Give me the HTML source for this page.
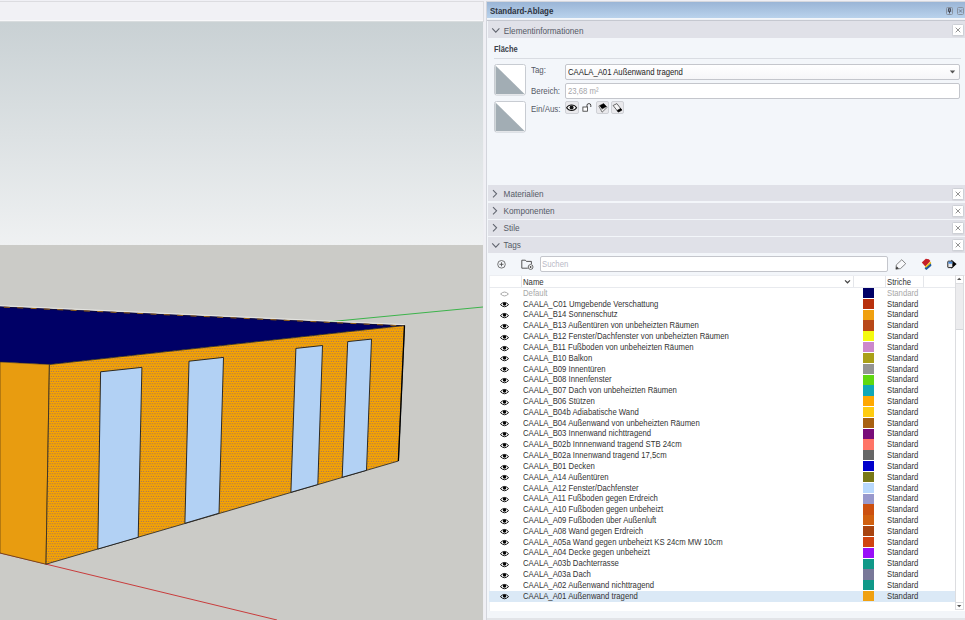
<!DOCTYPE html>
<html><head><meta charset="utf-8">
<style>
*{margin:0;padding:0;box-sizing:border-box}
html,body{width:965px;height:620px;overflow:hidden;background:#f0f0f5;font-family:"Liberation Sans",sans-serif;color:#333}
.abs{position:absolute}
#vp{position:absolute;left:0;top:0;width:484px;height:620px}
#panel{position:absolute;left:0;top:0;width:0;height:0}
.t{position:absolute;white-space:pre;font-size:8px;line-height:10px}
.hdr{position:absolute;left:487.5px;width:477.5px;height:16px;background:#e0e1e8}
.hdr .lbl{position:absolute;left:17px;top:3px;font-size:8.2px;color:#555a66;white-space:pre;line-height:10px}
.xb{position:absolute;width:13px;height:13px;background:#fff;border:1px solid #cdd0d6;border-radius:1.5px;box-shadow:0 0.5px 0.5px rgba(0,0,0,0.08)}

.hl{font-size:8.2px;color:#555a66}
.lab{color:#555a66;font-size:8.8px;transform:scaleX(0.9);transform-origin:0 0}
.n{font-size:8.8px;transform:scaleX(0.88);transform-origin:0 0}
.row{font-size:8.8px;letter-spacing:0;line-height:10.82px;transform:scaleX(0.879);transform-origin:0 0}
.thumb{position:absolute;width:32px;height:31.5px;background:#fff;border:1px solid #c8ccd2;border-radius:2px;overflow:hidden}
.thumb::after{content:"";position:absolute;left:1px;top:1px;right:1px;bottom:1px;background:linear-gradient(to top right,#a2adb4 50%,transparent 50%)}
.btn{position:absolute;top:101.3px;width:13.4px;height:13.2px;background:#e9e9ec;border:1px solid #cfd1d6;border-radius:2px}
.eye{position:absolute;left:500px;width:9px;height:5px}
.eye::before{content:"";position:absolute;left:0;top:0;width:7.6px;height:3.6px;border:0.7px solid #111;border-radius:50%}
.eye::after{content:"";position:absolute;left:3px;top:0.6px;width:3px;height:3.4px;background:#111;border-radius:50%}
.eyeo{position:absolute;left:500px;width:9px;height:5px}
.eyeo::before{content:"";position:absolute;left:0;top:0;width:7.6px;height:3.6px;border:0.7px solid #aaa;border-radius:50%}
</style></head><body>
<div id="vp">
<svg width="484" height="620" viewBox="0 0 484 620">
<defs>
<linearGradient id="sky" x1="0" y1="0" x2="0" y2="1">
<stop offset="0" stop-color="#c9d1d4"/><stop offset="1" stop-color="#eff1f2"/>
</linearGradient>
<pattern id="dots" width="2.5" height="5" patternUnits="userSpaceOnUse">
<rect width="2.5" height="5" fill="#f6a400"/>
<circle cx="1.25" cy="1.25" r="0.55" fill="#7a5c8c"/>
<circle cx="0" cy="3.75" r="0.55" fill="#7a5c8c"/><circle cx="2.5" cy="3.75" r="0.55" fill="#7a5c8c"/>
</pattern>
</defs>
<rect x="0" y="0" width="484" height="620" fill="#f0f0f5"/>
<rect x="0" y="1" width="483" height="1" fill="#dcdce0"/>
<rect x="0" y="2" width="483" height="18" fill="#f1f1f5"/>
<rect x="0" y="22" width="483" height="223" fill="url(#sky)"/><rect x="0" y="20" width="483" height="1.2" fill="#f8f8fa"/><rect x="0" y="21.2" width="483" height="1" fill="#d2d6d8"/>
<rect x="0" y="245" width="483" height="375" fill="#cbcbc7"/>
<rect x="483" y="1" width="1" height="21" fill="#dcdce0"/><rect x="483" y="22" width="1" height="598" fill="#eeeef2"/>
<!-- axes -->
<line x1="330" y1="321.7" x2="483" y2="307" stroke="#3cb44b" stroke-width="1"/>
<line x1="0" y1="553" x2="277" y2="620" stroke="#c83c3c" stroke-width="1"/>
<!-- roof -->
<polygon points="0,306.5 404.5,325.5 49.4,364.5 0,362" fill="#000066"/>
<line x1="0" y1="305.6" x2="404.5" y2="324.6" stroke="#e4e4e0" stroke-width="1"/>
<line x1="0" y1="307" x2="404.5" y2="326" stroke="#120c30" stroke-width="0.8"/>
<line x1="0" y1="306.9" x2="404.5" y2="325.9" stroke="#9a6418" stroke-width="1" stroke-dasharray="6 7.34" stroke-dashoffset="-3.9"/>
<!-- left face -->
<polygon points="0,362 49.4,364.5 46,564.2 0,553" fill="#e89c10" stroke="#3a2a10" stroke-width="0.6"/>
<!-- front face -->
<polygon points="49.4,364.5 404.5,325.5 398.4,461 46,564.2" fill="url(#dots)" stroke="#222" stroke-width="0.8"/>
<!-- windows -->
<line x1="404.5" y1="325.5" x2="398.4" y2="461" stroke="#000" stroke-width="1.3"/>
<g fill="#b2d1f4" stroke="#1a1a1a" stroke-width="0.9">
<polygon points="100.6,371.8 141.9,367.4 138.2,537.3 97.8,549"/>
<polygon points="189,361.2 223.5,357.4 219,513.2 184.9,523.3"/>
<polygon points="295.9,348.4 322.5,345.5 317.8,484.5 290.9,492.3"/>
<polygon points="347.7,341.6 371.5,339.1 366.5,470.3 342.2,477.3"/>
</g>
</svg>
</div>

<div id="panel">
<!-- panel outer -->
<div class="abs" style="left:486px;top:1.5px;width:479px;height:618.5px;background:#f3f6fa;border-left:1.2px solid #d3d5dc"></div><div class="abs" style="left:486px;top:1.2px;width:479px;height:1px;background:#d6d8de"></div>
<!-- title bar -->
<div class="abs" style="left:487px;top:2.2px;width:478px;height:16.2px;background:linear-gradient(#9ab5d6,#b9d2ec)"></div>
<div class="abs" style="left:487px;top:18.5px;width:478px;height:1px;background:#eef1f6"></div>
<div class="abs" style="left:487px;top:19.5px;width:478px;height:1.2px;background:#c5c8d0"></div>
<div class="t" style="left:490.2px;top:5.6px;font-weight:bold;font-size:8.8px;color:#2e3440;transform:scaleX(0.9);transform-origin:0 0">Standard-Ablage</div>
<div class="abs" style="left:946.3px;top:7px;width:6.5px;height:7.5px;border:1px solid #8892a0;border-radius:1.5px"></div>
<svg class="abs" style="left:946px;top:7px" width="7" height="8" viewBox="0 0 7 8"><path d="M2.2 1.8h2.6M2.6 1.8v2.4M4.4 1.8v2.4M1.8 4.2h3.4M3.5 4.2v2.2" stroke="#3a3a44" stroke-width="0.9" fill="none"/></svg>
<div class="abs" style="left:957.3px;top:7px;width:6.7px;height:7.5px;border:1px solid #8892a0;border-radius:1.5px"></div>
<svg class="abs" style="left:957px;top:7px" width="7" height="8" viewBox="0 0 7 8"><path d="M2 2.4l3 3.2M5 2.4l-3 3.2" stroke="#6a7080" stroke-width="0.8" fill="none"/></svg>

<!-- Elementinformationen header -->
<div class="hdr" style="top:21px;height:16.6px"></div>
<svg class="abs" style="left:491px;top:26.8px" width="10" height="7" viewBox="0 0 10 7"><path d="M1.2 1.4L4.8 5.2L8.4 1.4" stroke="#60646e" stroke-width="1.05" fill="none"/></svg>
<div class="t hl" style="left:503.8px;top:26.5px">Elementinformationen</div>
<div class="xb" style="left:951.8px;top:23.5px;width:12px;height:12px"></div>
<svg class="abs" style="left:951.8px;top:23.5px" width="12" height="12" viewBox="0 0 12 12"><path d="M3.7 3.7l4.6 4.6M8.3 3.7l-4.6 4.6" stroke="#4a4a4a" stroke-width="0.6" fill="none"/></svg>

<!-- content -->
<div class="t" style="left:493.8px;top:44.2px;font-weight:bold;font-size:8.6px;color:#3a3f4a;transform:scaleX(0.87);transform-origin:0 0">Fläche</div>
<div class="abs" style="left:493.5px;top:58px;width:467px;height:1px;background:#d9dce2"></div>
<svg class="abs" style="left:493.6px;top:64.1px" width="32" height="31.5" viewBox="0 0 32 31.5"><rect x="0.5" y="0.5" width="31" height="30.5" rx="2" fill="#fff" stroke="#c8ccd2"/><path d="M1.5 1.5L30.5 30H1.5z" fill="#a2adb4"/></svg>
<svg class="abs" style="left:493.6px;top:101.4px" width="32" height="31.5" viewBox="0 0 32 31.5"><rect x="0.5" y="0.5" width="31" height="30.5" rx="2" fill="#fff" stroke="#c8ccd2"/><path d="M1.5 1.5L30.5 30H1.5z" fill="#a2adb4"/></svg>
<div class="t lab" style="left:530.6px;top:65px">Tag:</div>
<div class="t lab" style="left:530.6px;top:85.6px">Bereich:</div>
<div class="t lab" style="left:530.6px;top:103.7px">Ein/Aus:</div>
<div class="abs" style="left:565px;top:64.4px;width:395px;height:15.2px;background:linear-gradient(#ffffff,#f6f6f8);border:1px solid #c4c6cc;border-radius:2px"></div>
<div class="t n" style="left:567.9px;top:66.9px;color:#222">CAALA_A01 Außenwand tragend</div>
<svg class="abs" style="left:949px;top:70px" width="7" height="4" viewBox="0 0 7 4"><path d="M0.8 0.6h5.4L3.5 3.4z" fill="#555"/></svg>
<div class="abs" style="left:565px;top:83.2px;width:395px;height:15.7px;background:#fff;border:1px solid #c4c6cc;border-radius:2px"></div>
<div class="t n" style="left:567.5px;top:85.7px;color:#a6a6aa">23,68 m²</div>
<!-- buttons -->
<div class="btn" style="left:565.4px"></div>
<div class="btn" style="left:595.5px"></div>
<div class="btn" style="left:611.1px"></div>
<svg class="abs" style="left:565.4px;top:101.3px" width="13.2" height="13.4" viewBox="0 0 13.2 13.4"><path d="M1.6 6.8C3.9 3.2 9.3 3.2 11.6 6.8C9.3 10.4 3.9 10.4 1.6 6.8z" fill="#fff" stroke="#111" stroke-width="1.05"/><circle cx="6.6" cy="6.5" r="2" fill="#111"/></svg>
<svg class="abs" style="left:582px;top:103px" width="10" height="9" viewBox="0 0 10 9"><rect x="0.9" y="4" width="4.6" height="4.2" fill="#fff" stroke="#333" stroke-width="0.8"/><path d="M5 4V2.2Q5 0.6 6.9 0.6Q8.8 0.6 8.8 2.2V4" fill="none" stroke="#333" stroke-width="0.9"/></svg>
<svg class="abs" style="left:595.5px;top:101.3px" width="13.4" height="13.4" viewBox="0 0 13.4 13.4"><path d="M2.8 5L7.7 2.6L11.2 6.3L6.1 11.2z" fill="#f4f4f4" stroke="#555" stroke-width="0.8"/><path d="M3.6 4.8L7.7 2.6L10.6 5.8L6.2 8.2z" fill="#000"/><path d="M5 8.6L9.4 6.6" stroke="#999" stroke-width="0.6"/></svg>
<svg class="abs" style="left:611.1px;top:101.3px" width="13.4" height="13.4" viewBox="0 0 13.4 13.4"><path d="M2.1 4.5L5.9 2.6L10.8 9.1L7.3 11z" fill="#f4f4f4" stroke="#444" stroke-width="0.8"/><path d="M6.2 9.4L9.6 7.5L10.8 9.1L7.3 11z" fill="#000" stroke="#000" stroke-width="0.6"/></svg>

<!-- collapsed headers -->
<div class="hdr" style="top:185.1px;height:16.4px"></div>
<div class="hdr" style="top:202.5px;height:16.4px"></div>
<div class="hdr" style="top:219.9px;height:16.2px"></div>
<div class="hdr" style="top:237px;height:15.6px"></div>
<svg class="abs" style="left:491px;top:188.5px" width="7" height="10" viewBox="0 0 7 10"><path d="M2 1.2L5.6 4.8L2 8.4" stroke="#60646e" stroke-width="1.05" fill="none"/></svg>
<svg class="abs" style="left:491px;top:205.7px" width="7" height="10" viewBox="0 0 7 10"><path d="M2 1.2L5.6 4.8L2 8.4" stroke="#60646e" stroke-width="1.05" fill="none"/></svg>
<svg class="abs" style="left:491px;top:222.9px" width="7" height="10" viewBox="0 0 7 10"><path d="M2 1.2L5.6 4.8L2 8.4" stroke="#60646e" stroke-width="1.05" fill="none"/></svg>
<svg class="abs" style="left:491px;top:241.5px" width="10" height="7" viewBox="0 0 10 7"><path d="M1.2 1.4L4.8 5.2L8.4 1.4" stroke="#60646e" stroke-width="1.05" fill="none"/></svg>
<div class="t hl" style="left:503.6px;top:189.8px">Materialien</div>
<div class="t hl" style="left:503.6px;top:207px">Komponenten</div>
<div class="t hl" style="left:503.6px;top:224.2px">Stile</div>
<div class="t hl" style="left:503.6px;top:241px">Tags</div>
<div class="xb" style="left:951.8px;top:187.5px;width:12px;height:12px"></div>
<div class="xb" style="left:951.8px;top:204.7px;width:12px;height:12px"></div>
<div class="xb" style="left:951.8px;top:221.9px;width:12px;height:12px"></div>
<div class="xb" style="left:951.8px;top:238.8px;width:12px;height:12px"></div>
<svg class="abs" style="left:951.8px;top:187.5px" width="12" height="12" viewBox="0 0 12 12"><path d="M3.7 3.7l4.6 4.6M8.3 3.7l-4.6 4.6" stroke="#4a4a4a" stroke-width="0.6" fill="none"/></svg>
<svg class="abs" style="left:951.8px;top:204.7px" width="12" height="12" viewBox="0 0 12 12"><path d="M3.7 3.7l4.6 4.6M8.3 3.7l-4.6 4.6" stroke="#4a4a4a" stroke-width="0.6" fill="none"/></svg>
<svg class="abs" style="left:951.8px;top:221.9px" width="12" height="12" viewBox="0 0 12 12"><path d="M3.7 3.7l4.6 4.6M8.3 3.7l-4.6 4.6" stroke="#4a4a4a" stroke-width="0.6" fill="none"/></svg>
<svg class="abs" style="left:951.8px;top:238.8px" width="12" height="12" viewBox="0 0 12 12"><path d="M3.7 3.7l4.6 4.6M8.3 3.7l-4.6 4.6" stroke="#4a4a4a" stroke-width="0.6" fill="none"/></svg>

<!-- tags toolbar -->
<svg class="abs" style="left:497px;top:260px" width="10" height="9" viewBox="0 0 10 9"><circle cx="4.5" cy="4.3" r="3.8" fill="none" stroke="#555" stroke-width="0.8"/><path d="M4.5 2.3v4M2.5 4.3h4" stroke="#555" stroke-width="0.9"/></svg>
<svg class="abs" style="left:521px;top:259px" width="13" height="11" viewBox="0 0 13 11"><path d="M0.8 1.2h3.6l1 1.2h5v2.6M0.8 1.2v8h6" fill="none" stroke="#444" stroke-width="0.9"/><circle cx="9.6" cy="8" r="2.4" fill="#fff" stroke="#444" stroke-width="0.8"/><circle cx="9.6" cy="8" r="0.9" fill="#444"/></svg>
<div class="abs" style="left:540px;top:256px;width:347.5px;height:15.8px;background:#fff;border:1px solid #c4c6cc;border-radius:2px"></div>
<div class="t n" style="left:542.1px;top:259.2px;color:#b9b9c6">Suchen</div>
<svg class="abs" style="left:895px;top:258.5px" width="12" height="11" viewBox="0 0 12 11"><path d="M0.9 10.2L1.3 5.9L6.8 0.7L10.7 4.7L5.5 9.6z" fill="#f8f9fb" stroke="#707070" stroke-width="0.85"/><path d="M0.9 10.2L1.5 7.2L3.9 9.4z" fill="#333"/></svg>
<svg class="abs" style="left:921px;top:258px" width="11" height="12" viewBox="0 0 11 12"><path d="M3.8 9.8L9.8 4.4L10.4 7.8L5.4 12L3.8 10.8z" fill="#1d5a9e"/><path d="M0.8 4.5L4.8 0.7L7.8 1.2L9.4 3L4.3 8.6z" fill="#c42028"/><path d="M4.4 9.2L9.8 4.4" stroke="#f2c010" stroke-width="1.5"/></svg>
<svg class="abs" style="left:946.5px;top:258.5px" width="10" height="11" viewBox="0 0 10 11"><path d="M4.4 0.8L9.6 5.1L4.4 9.8z" fill="#000"/><rect x="0.8" y="2.2" width="5" height="6.4" rx="0.6" fill="#e8e8ea" stroke="#111" stroke-width="0.9"/><rect x="1.4" y="2.7" width="3.9" height="2" fill="#4a8ad8"/></svg>

<!-- table -->
<div class="abs" style="left:489px;top:274.9px;width:476px;height:335.8px;background:#fff;border-top:1px solid #eceef2;border-left:1px solid #eef0f4"></div>
<div class="abs" style="left:489px;top:286.6px;width:466px;height:1px;background:#e8eaee"></div>
<div class="abs" style="left:520.6px;top:275.5px;width:1px;height:11.5px;background:#e4e6ea"></div>
<div class="abs" style="left:853.2px;top:275.5px;width:1px;height:11.5px;background:#e4e6ea"></div>
<div class="abs" style="left:885.3px;top:275.5px;width:1px;height:11.5px;background:#e4e6ea"></div>
<div class="abs" style="left:923.2px;top:275.5px;width:1px;height:11.5px;background:#e4e6ea"></div>
<div class="t n" style="left:522.7px;top:277px;color:#333">Name</div>
<div class="t n" style="left:886.9px;top:277px;color:#333">Striche</div>
<svg class="abs" style="left:844px;top:279px" width="7" height="5" viewBox="0 0 7 5"><path d="M1 1.4L3.5 3.8L6 1.4" stroke="#444" stroke-width="1.2" fill="none"/></svg>
<!-- scrollbar -->
<div class="abs" style="left:955.4px;top:275.2px;width:8.4px;height:335px;background:#fff;border:1px solid #dcdde0"></div>
<div class="abs" style="left:955.9px;top:283px;width:7.4px;height:47.4px;background:#ececee;border-bottom:1px solid #d4d6da"></div>
<div class="abs" style="left:955.4px;top:283px;width:8.4px;height:1px;background:#dcdde0"></div>
<div class="abs" style="left:955.4px;top:601.5px;width:8.4px;height:1px;background:#dcdde0"></div>
<svg class="abs" style="left:955.4px;top:276px" width="8.4" height="6" viewBox="0 0 8.4 6"><path d="M2 4L4.2 1.8L6.4 4z" fill="#555"/></svg>
<svg class="abs" style="left:955.4px;top:603px" width="8.4" height="6" viewBox="0 0 8.4 6"><path d="M2 2L4.2 4.2L6.4 2z" fill="#555"/></svg>
<div class="abs" style="left:487px;top:610.7px;width:478px;height:10px;background:#f2f5f9"></div>
<div class="abs" style="left:487px;top:617.8px;width:478px;height:2.2px;background:#e2e4e8"></div>
<div class="abs" style="left:863px;top:288.00px;width:11px;height:10.2px;background:#000066"></div>
<svg class="abs" style="left:500px;top:290.60px" width="9" height="6" viewBox="0 0 9 6"><path d="M0.6 3Q4.5 -0.9 8.4 3Q4.5 6.9 0.6 3z" fill="none" stroke="#a4a4a4" stroke-width="0.95"/></svg>
<div class="t row" style="left:522.5px;top:287.80px;color:#a8a8a8">Default</div>
<div class="t row" style="left:886.5px;top:287.80px;color:#a8a8a8">Standard</div>
<div class="abs" style="left:863px;top:298.82px;width:11px;height:10.2px;background:#b8300c"></div>
<svg class="abs" style="left:500px;top:301.22px" width="9" height="7" viewBox="0 0 9 7"><path d="M0.4 3.6Q4.5 -0.7 8.6 3.6Q4.5 7.9 0.4 3.6z" fill="none" stroke="#1a1a1a" stroke-width="1"/><circle cx="4.5" cy="3.1" r="1.7" fill="#000"/></svg>
<div class="t row" style="left:522.5px;top:298.62px;color:#333">CAALA_C01 Umgebende Verschattung</div>
<div class="t row" style="left:886.5px;top:298.62px;color:#333">Standard</div>
<div class="abs" style="left:863px;top:309.64px;width:11px;height:10.2px;background:#f0a010"></div>
<svg class="abs" style="left:500px;top:312.04px" width="9" height="7" viewBox="0 0 9 7"><path d="M0.4 3.6Q4.5 -0.7 8.6 3.6Q4.5 7.9 0.4 3.6z" fill="none" stroke="#1a1a1a" stroke-width="1"/><circle cx="4.5" cy="3.1" r="1.7" fill="#000"/></svg>
<div class="t row" style="left:522.5px;top:309.44px;color:#333">CAALA_B14 Sonnenschutz</div>
<div class="t row" style="left:886.5px;top:309.44px;color:#333">Standard</div>
<div class="abs" style="left:863px;top:320.46px;width:11px;height:10.2px;background:#b84818"></div>
<svg class="abs" style="left:500px;top:322.86px" width="9" height="7" viewBox="0 0 9 7"><path d="M0.4 3.6Q4.5 -0.7 8.6 3.6Q4.5 7.9 0.4 3.6z" fill="none" stroke="#1a1a1a" stroke-width="1"/><circle cx="4.5" cy="3.1" r="1.7" fill="#000"/></svg>
<div class="t row" style="left:522.5px;top:320.26px;color:#333">CAALA_B13 Außentüren von unbeheizten Räumen</div>
<div class="t row" style="left:886.5px;top:320.26px;color:#333">Standard</div>
<div class="abs" style="left:863px;top:331.28px;width:11px;height:10.2px;background:#f4fa10"></div>
<svg class="abs" style="left:500px;top:333.68px" width="9" height="7" viewBox="0 0 9 7"><path d="M0.4 3.6Q4.5 -0.7 8.6 3.6Q4.5 7.9 0.4 3.6z" fill="none" stroke="#1a1a1a" stroke-width="1"/><circle cx="4.5" cy="3.1" r="1.7" fill="#000"/></svg>
<div class="t row" style="left:522.5px;top:331.08px;color:#333">CAALA_B12 Fenster/Dachfenster von unbeheizten Räumen</div>
<div class="t row" style="left:886.5px;top:331.08px;color:#333">Standard</div>
<div class="abs" style="left:863px;top:342.10px;width:11px;height:10.2px;background:#cc88cc"></div>
<svg class="abs" style="left:500px;top:344.50px" width="9" height="7" viewBox="0 0 9 7"><path d="M0.4 3.6Q4.5 -0.7 8.6 3.6Q4.5 7.9 0.4 3.6z" fill="none" stroke="#1a1a1a" stroke-width="1"/><circle cx="4.5" cy="3.1" r="1.7" fill="#000"/></svg>
<div class="t row" style="left:522.5px;top:341.90px;color:#333">CAALA_B11 Fußboden von unbeheizten Räumen</div>
<div class="t row" style="left:886.5px;top:341.90px;color:#333">Standard</div>
<div class="abs" style="left:863px;top:352.92px;width:11px;height:10.2px;background:#aaa018"></div>
<svg class="abs" style="left:500px;top:355.32px" width="9" height="7" viewBox="0 0 9 7"><path d="M0.4 3.6Q4.5 -0.7 8.6 3.6Q4.5 7.9 0.4 3.6z" fill="none" stroke="#1a1a1a" stroke-width="1"/><circle cx="4.5" cy="3.1" r="1.7" fill="#000"/></svg>
<div class="t row" style="left:522.5px;top:352.72px;color:#333">CAALA_B10 Balkon</div>
<div class="t row" style="left:886.5px;top:352.72px;color:#333">Standard</div>
<div class="abs" style="left:863px;top:363.74px;width:11px;height:10.2px;background:#949494"></div>
<svg class="abs" style="left:500px;top:366.14px" width="9" height="7" viewBox="0 0 9 7"><path d="M0.4 3.6Q4.5 -0.7 8.6 3.6Q4.5 7.9 0.4 3.6z" fill="none" stroke="#1a1a1a" stroke-width="1"/><circle cx="4.5" cy="3.1" r="1.7" fill="#000"/></svg>
<div class="t row" style="left:522.5px;top:363.54px;color:#333">CAALA_B09 Innentüren</div>
<div class="t row" style="left:886.5px;top:363.54px;color:#333">Standard</div>
<div class="abs" style="left:863px;top:374.56px;width:11px;height:10.2px;background:#60d810"></div>
<svg class="abs" style="left:500px;top:376.96px" width="9" height="7" viewBox="0 0 9 7"><path d="M0.4 3.6Q4.5 -0.7 8.6 3.6Q4.5 7.9 0.4 3.6z" fill="none" stroke="#1a1a1a" stroke-width="1"/><circle cx="4.5" cy="3.1" r="1.7" fill="#000"/></svg>
<div class="t row" style="left:522.5px;top:374.36px;color:#333">CAALA_B08 Innenfenster</div>
<div class="t row" style="left:886.5px;top:374.36px;color:#333">Standard</div>
<div class="abs" style="left:863px;top:385.38px;width:11px;height:10.2px;background:#10a8b8"></div>
<svg class="abs" style="left:500px;top:387.78px" width="9" height="7" viewBox="0 0 9 7"><path d="M0.4 3.6Q4.5 -0.7 8.6 3.6Q4.5 7.9 0.4 3.6z" fill="none" stroke="#1a1a1a" stroke-width="1"/><circle cx="4.5" cy="3.1" r="1.7" fill="#000"/></svg>
<div class="t row" style="left:522.5px;top:385.18px;color:#333">CAALA_B07 Dach von unbeheizten Räumen</div>
<div class="t row" style="left:886.5px;top:385.18px;color:#333">Standard</div>
<div class="abs" style="left:863px;top:396.20px;width:11px;height:10.2px;background:#ffa800"></div>
<svg class="abs" style="left:500px;top:398.60px" width="9" height="7" viewBox="0 0 9 7"><path d="M0.4 3.6Q4.5 -0.7 8.6 3.6Q4.5 7.9 0.4 3.6z" fill="none" stroke="#1a1a1a" stroke-width="1"/><circle cx="4.5" cy="3.1" r="1.7" fill="#000"/></svg>
<div class="t row" style="left:522.5px;top:396.00px;color:#333">CAALA_B06 Stützen</div>
<div class="t row" style="left:886.5px;top:396.00px;color:#333">Standard</div>
<div class="abs" style="left:863px;top:407.02px;width:11px;height:10.2px;background:#ffcc10"></div>
<svg class="abs" style="left:500px;top:409.42px" width="9" height="7" viewBox="0 0 9 7"><path d="M0.4 3.6Q4.5 -0.7 8.6 3.6Q4.5 7.9 0.4 3.6z" fill="none" stroke="#1a1a1a" stroke-width="1"/><circle cx="4.5" cy="3.1" r="1.7" fill="#000"/></svg>
<div class="t row" style="left:522.5px;top:406.82px;color:#333">CAALA_B04b Adiabatische Wand</div>
<div class="t row" style="left:886.5px;top:406.82px;color:#333">Standard</div>
<div class="abs" style="left:863px;top:417.84px;width:11px;height:10.2px;background:#a86010"></div>
<svg class="abs" style="left:500px;top:420.24px" width="9" height="7" viewBox="0 0 9 7"><path d="M0.4 3.6Q4.5 -0.7 8.6 3.6Q4.5 7.9 0.4 3.6z" fill="none" stroke="#1a1a1a" stroke-width="1"/><circle cx="4.5" cy="3.1" r="1.7" fill="#000"/></svg>
<div class="t row" style="left:522.5px;top:417.64px;color:#333">CAALA_B04 Außenwand von unbeheizten Räumen</div>
<div class="t row" style="left:886.5px;top:417.64px;color:#333">Standard</div>
<div class="abs" style="left:863px;top:428.66px;width:11px;height:10.2px;background:#780c78"></div>
<svg class="abs" style="left:500px;top:431.06px" width="9" height="7" viewBox="0 0 9 7"><path d="M0.4 3.6Q4.5 -0.7 8.6 3.6Q4.5 7.9 0.4 3.6z" fill="none" stroke="#1a1a1a" stroke-width="1"/><circle cx="4.5" cy="3.1" r="1.7" fill="#000"/></svg>
<div class="t row" style="left:522.5px;top:428.46px;color:#333">CAALA_B03 Innenwand nichttragend</div>
<div class="t row" style="left:886.5px;top:428.46px;color:#333">Standard</div>
<div class="abs" style="left:863px;top:439.48px;width:11px;height:10.2px;background:#ff7466"></div>
<svg class="abs" style="left:500px;top:441.88px" width="9" height="7" viewBox="0 0 9 7"><path d="M0.4 3.6Q4.5 -0.7 8.6 3.6Q4.5 7.9 0.4 3.6z" fill="none" stroke="#1a1a1a" stroke-width="1"/><circle cx="4.5" cy="3.1" r="1.7" fill="#000"/></svg>
<div class="t row" style="left:522.5px;top:439.28px;color:#333">CAALA_B02b Innnenwand tragend STB 24cm</div>
<div class="t row" style="left:886.5px;top:439.28px;color:#333">Standard</div>
<div class="abs" style="left:863px;top:450.30px;width:11px;height:10.2px;background:#666666"></div>
<svg class="abs" style="left:500px;top:452.70px" width="9" height="7" viewBox="0 0 9 7"><path d="M0.4 3.6Q4.5 -0.7 8.6 3.6Q4.5 7.9 0.4 3.6z" fill="none" stroke="#1a1a1a" stroke-width="1"/><circle cx="4.5" cy="3.1" r="1.7" fill="#000"/></svg>
<div class="t row" style="left:522.5px;top:450.10px;color:#333">CAALA_B02a Innenwand tragend 17,5cm</div>
<div class="t row" style="left:886.5px;top:450.10px;color:#333">Standard</div>
<div class="abs" style="left:863px;top:461.12px;width:11px;height:10.2px;background:#0000cc"></div>
<svg class="abs" style="left:500px;top:463.52px" width="9" height="7" viewBox="0 0 9 7"><path d="M0.4 3.6Q4.5 -0.7 8.6 3.6Q4.5 7.9 0.4 3.6z" fill="none" stroke="#1a1a1a" stroke-width="1"/><circle cx="4.5" cy="3.1" r="1.7" fill="#000"/></svg>
<div class="t row" style="left:522.5px;top:460.92px;color:#333">CAALA_B01 Decken</div>
<div class="t row" style="left:886.5px;top:460.92px;color:#333">Standard</div>
<div class="abs" style="left:863px;top:471.94px;width:11px;height:10.2px;background:#787818"></div>
<svg class="abs" style="left:500px;top:474.34px" width="9" height="7" viewBox="0 0 9 7"><path d="M0.4 3.6Q4.5 -0.7 8.6 3.6Q4.5 7.9 0.4 3.6z" fill="none" stroke="#1a1a1a" stroke-width="1"/><circle cx="4.5" cy="3.1" r="1.7" fill="#000"/></svg>
<div class="t row" style="left:522.5px;top:471.74px;color:#333">CAALA_A14 Außentüren</div>
<div class="t row" style="left:886.5px;top:471.74px;color:#333">Standard</div>
<div class="abs" style="left:863px;top:482.76px;width:11px;height:10.2px;background:#b8d8fc"></div>
<svg class="abs" style="left:500px;top:485.16px" width="9" height="7" viewBox="0 0 9 7"><path d="M0.4 3.6Q4.5 -0.7 8.6 3.6Q4.5 7.9 0.4 3.6z" fill="none" stroke="#1a1a1a" stroke-width="1"/><circle cx="4.5" cy="3.1" r="1.7" fill="#000"/></svg>
<div class="t row" style="left:522.5px;top:482.56px;color:#333">CAALA_A12 Fenster/Dachfenster</div>
<div class="t row" style="left:886.5px;top:482.56px;color:#333">Standard</div>
<div class="abs" style="left:863px;top:493.58px;width:11px;height:10.2px;background:#9898cc"></div>
<svg class="abs" style="left:500px;top:495.98px" width="9" height="7" viewBox="0 0 9 7"><path d="M0.4 3.6Q4.5 -0.7 8.6 3.6Q4.5 7.9 0.4 3.6z" fill="none" stroke="#1a1a1a" stroke-width="1"/><circle cx="4.5" cy="3.1" r="1.7" fill="#000"/></svg>
<div class="t row" style="left:522.5px;top:493.38px;color:#333">CAALA_A11 Fußboden gegen Erdreich</div>
<div class="t row" style="left:886.5px;top:493.38px;color:#333">Standard</div>
<div class="abs" style="left:863px;top:504.40px;width:11px;height:10.2px;background:#cc5010"></div>
<svg class="abs" style="left:500px;top:506.80px" width="9" height="7" viewBox="0 0 9 7"><path d="M0.4 3.6Q4.5 -0.7 8.6 3.6Q4.5 7.9 0.4 3.6z" fill="none" stroke="#1a1a1a" stroke-width="1"/><circle cx="4.5" cy="3.1" r="1.7" fill="#000"/></svg>
<div class="t row" style="left:522.5px;top:504.20px;color:#333">CAALA_A10 Fußboden gegen unbeheizt</div>
<div class="t row" style="left:886.5px;top:504.20px;color:#333">Standard</div>
<div class="abs" style="left:863px;top:515.22px;width:11px;height:10.2px;background:#d06010"></div>
<svg class="abs" style="left:500px;top:517.62px" width="9" height="7" viewBox="0 0 9 7"><path d="M0.4 3.6Q4.5 -0.7 8.6 3.6Q4.5 7.9 0.4 3.6z" fill="none" stroke="#1a1a1a" stroke-width="1"/><circle cx="4.5" cy="3.1" r="1.7" fill="#000"/></svg>
<div class="t row" style="left:522.5px;top:515.02px;color:#333">CAALA_A09 Fußboden über Außenluft</div>
<div class="t row" style="left:886.5px;top:515.02px;color:#333">Standard</div>
<div class="abs" style="left:863px;top:526.04px;width:11px;height:10.2px;background:#a84410"></div>
<svg class="abs" style="left:500px;top:528.44px" width="9" height="7" viewBox="0 0 9 7"><path d="M0.4 3.6Q4.5 -0.7 8.6 3.6Q4.5 7.9 0.4 3.6z" fill="none" stroke="#1a1a1a" stroke-width="1"/><circle cx="4.5" cy="3.1" r="1.7" fill="#000"/></svg>
<div class="t row" style="left:522.5px;top:525.84px;color:#333">CAALA_A08 Wand gegen Erdreich</div>
<div class="t row" style="left:886.5px;top:525.84px;color:#333">Standard</div>
<div class="abs" style="left:863px;top:536.86px;width:11px;height:10.2px;background:#d04410"></div>
<svg class="abs" style="left:500px;top:539.26px" width="9" height="7" viewBox="0 0 9 7"><path d="M0.4 3.6Q4.5 -0.7 8.6 3.6Q4.5 7.9 0.4 3.6z" fill="none" stroke="#1a1a1a" stroke-width="1"/><circle cx="4.5" cy="3.1" r="1.7" fill="#000"/></svg>
<div class="t row" style="left:522.5px;top:536.66px;color:#333">CAALA_A05a Wand gegen unbeheizt KS 24cm MW 10cm</div>
<div class="t row" style="left:886.5px;top:536.66px;color:#333">Standard</div>
<div class="abs" style="left:863px;top:547.68px;width:11px;height:10.2px;background:#9810f8"></div>
<svg class="abs" style="left:500px;top:550.08px" width="9" height="7" viewBox="0 0 9 7"><path d="M0.4 3.6Q4.5 -0.7 8.6 3.6Q4.5 7.9 0.4 3.6z" fill="none" stroke="#1a1a1a" stroke-width="1"/><circle cx="4.5" cy="3.1" r="1.7" fill="#000"/></svg>
<div class="t row" style="left:522.5px;top:547.48px;color:#333">CAALA_A04 Decke gegen unbeheizt</div>
<div class="t row" style="left:886.5px;top:547.48px;color:#333">Standard</div>
<div class="abs" style="left:863px;top:558.50px;width:11px;height:10.2px;background:#109888"></div>
<svg class="abs" style="left:500px;top:560.90px" width="9" height="7" viewBox="0 0 9 7"><path d="M0.4 3.6Q4.5 -0.7 8.6 3.6Q4.5 7.9 0.4 3.6z" fill="none" stroke="#1a1a1a" stroke-width="1"/><circle cx="4.5" cy="3.1" r="1.7" fill="#000"/></svg>
<div class="t row" style="left:522.5px;top:558.30px;color:#333">CAALA_A03b Dachterrasse</div>
<div class="t row" style="left:886.5px;top:558.30px;color:#333">Standard</div>
<div class="abs" style="left:863px;top:569.32px;width:11px;height:10.2px;background:#787898"></div>
<svg class="abs" style="left:500px;top:571.72px" width="9" height="7" viewBox="0 0 9 7"><path d="M0.4 3.6Q4.5 -0.7 8.6 3.6Q4.5 7.9 0.4 3.6z" fill="none" stroke="#1a1a1a" stroke-width="1"/><circle cx="4.5" cy="3.1" r="1.7" fill="#000"/></svg>
<div class="t row" style="left:522.5px;top:569.12px;color:#333">CAALA_A03a Dach</div>
<div class="t row" style="left:886.5px;top:569.12px;color:#333">Standard</div>
<div class="abs" style="left:863px;top:580.14px;width:11px;height:10.2px;background:#109888"></div>
<svg class="abs" style="left:500px;top:582.54px" width="9" height="7" viewBox="0 0 9 7"><path d="M0.4 3.6Q4.5 -0.7 8.6 3.6Q4.5 7.9 0.4 3.6z" fill="none" stroke="#1a1a1a" stroke-width="1"/><circle cx="4.5" cy="3.1" r="1.7" fill="#000"/></svg>
<div class="t row" style="left:522.5px;top:579.94px;color:#333">CAALA_A02 Außenwand nichttragend</div>
<div class="t row" style="left:886.5px;top:579.94px;color:#333">Standard</div>
<div class="abs" style="left:489px;top:591.16px;width:466px;height:10.8px;background:#dbe9f6"></div>
<div class="abs" style="left:863px;top:590.96px;width:11px;height:10.2px;background:#f0a010"></div>
<svg class="abs" style="left:500px;top:593.36px" width="9" height="7" viewBox="0 0 9 7"><path d="M0.4 3.6Q4.5 -0.7 8.6 3.6Q4.5 7.9 0.4 3.6z" fill="none" stroke="#1a1a1a" stroke-width="1"/><circle cx="4.5" cy="3.1" r="1.7" fill="#000"/></svg>
<div class="t row" style="left:522.5px;top:590.76px;color:#333">CAALA_A01 Außenwand tragend</div>
<div class="t row" style="left:886.5px;top:590.76px;color:#333">Standard</div>
</div>

</body></html>
